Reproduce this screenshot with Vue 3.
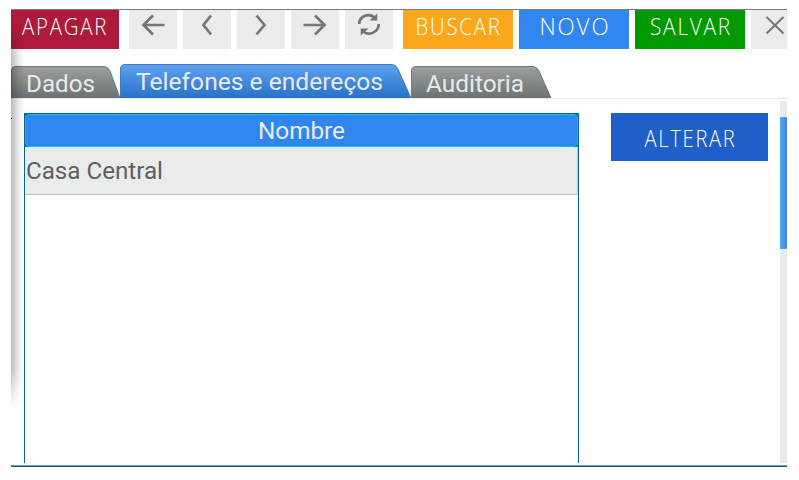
<script setup>
const actions = [
  { kind: 'text', label: 'APAGAR', color: '#ad1a3c', width: 108, gap: 10, x: 11, length: 86 },
  { kind: 'icon', icon: 'back', width: 48, gap: 6 },
  { kind: 'icon', icon: 'prev', width: 48, gap: 6 },
  { kind: 'icon', icon: 'next', width: 48, gap: 6 },
  { kind: 'icon', icon: 'forward', width: 48, gap: 6 },
  { kind: 'icon', icon: 'refresh', width: 48, gap: 10 },
  { kind: 'text', label: 'BUSCAR', color: '#fba71b', width: 110, gap: 6, x: 12.5, length: 86 },
  { kind: 'text', label: 'NOVO', color: '#2f86ef', width: 110, gap: 6, x: 20.5, length: 71 },
  { kind: 'text', label: 'SALVAR', color: '#009900', width: 110, gap: 6, x: 15, length: 82 },
  { kind: 'icon', icon: 'close', width: 36, gap: 0 },
]

const icons = {
  back: 'M35.5 15H14.5M24 5.5L14.5 15L24 24.5',
  prev: 'M28 5.5L20.5 15L28 24.5',
  next: 'M19.5 5.5L27.5 15L19.5 24.5',
  forward: 'M12.5 15H33.5M24 5.5L33.5 15L24 24.5',
  close: 'M15.5 7L32.5 23.5M32.5 7L15.5 23.5',
}

const tabs = [
  { label: 'Dados', width: 109, height: 32, slope: 10, x: 15, y: 26, length: 69, active: false },
  { label: 'Telefones e endereços', width: 291, height: 34, slope: 13, x: 16, y: 26, length: 247, active: true },
  { label: 'Auditoria', width: 140, height: 32, slope: 12, x: 15, y: 26, length: 98, active: false },
]

function tabPath(t) {
  const s = t.width - t.slope
  return `M.5 ${t.height}V5Q.5 .5 5 .5H${s - 6}Q${s - 2} .5 ${s} 5L${t.width} ${t.height}`
}
</script>

<template>
  <main class="window">
    <div class="toolbar">
      <button
        v-for="(a, i) in actions"
        :key="i"
        class="action"
        :style="{ width: a.width + 'px', marginRight: a.gap + 'px', background: a.color }"
      >
        <svg v-if="a.kind === 'text'" class="art" :width="a.width" height="39">
          <text class="light" :x="a.x" y="25" :textLength="a.length" lengthAdjust="spacingAndGlyphs">{{ a.label }}</text>
        </svg>
        <svg v-else-if="a.icon === 'refresh'" class="art" width="48" height="39">
          <g fill="none" stroke="#757575" stroke-width="2.7">
            <path d="M14.3 14C14.3 5.5 25 2 30.5 8.5" />
            <path d="M33.7 14C33.7 22.5 23 27 17.5 20.5" />
          </g>
          <path d="M32.3 3.5V10.5H24.5ZM15.7 25.5V18.5H23.5Z" fill="#757575" />
        </svg>
        <svg v-else class="art" width="48" height="39">
          <path class="stroke" :class="{ thin: a.icon === 'close' }" :d="icons[a.icon]" />
        </svg>
      </button>
    </div>

    <nav class="tabs">
      <svg v-for="t in tabs" :key="t.label" class="tab" :width="t.width" :height="t.height">
        <defs>
          <linearGradient :id="'fill-' + t.width" x1="0" y1="0" x2="0" y2="1">
            <stop offset="0" :stop-color="t.active ? '#5ea2ef' : '#9b9fa0'" />
            <stop offset="1" :stop-color="t.active ? '#2872c9' : '#6c7273'" />
          </linearGradient>
        </defs>
        <path :d="tabPath(t)" :fill="`url(#fill-${t.width})`" :stroke="t.active ? '#3d7cc4' : '#72797a'" />
        <text class="tab-label" :x="t.x" :y="t.y" :textLength="t.length" lengthAdjust="spacingAndGlyphs">{{ t.label }}</text>
      </svg>
    </nav>

    <section class="content">
      <div class="grid">
        <div class="head"><div class="head-cell">
          <svg class="art" width="551" height="31"><text class="tab-label" x="232" y="24" textLength="87" lengthAdjust="spacingAndGlyphs">Nombre</text></svg>
        </div></div>
        <div class="row">
          <svg class="art" width="552" height="47"><text class="cell" x="1" y="32" textLength="137" lengthAdjust="spacingAndGlyphs">Casa Central</text></svg>
        </div>
      </div>
      <button class="alter">
        <svg class="art" width="157" height="48"><text class="light" x="33.5" y="34" textLength="92" lengthAdjust="spacingAndGlyphs">ALTERAR</text></svg>
      </button>
      <div class="scroll"><div class="thumb"></div></div>
    </section>
    <div class="shade"></div>
    <div class="tick"></div>
  </main>
</template>

<style>
body { background: #fff; }
</style>

<style scoped>
* { box-sizing: border-box; }
.window {
  position: relative;
  width: 776px;
  height: 458px;
  margin: 9px 0 0 11px;
  border-top: 1px solid #7c7c7c;
  border-bottom: 1px solid #00659b;
  box-shadow: inset 0 -1px #839196;
  display: flex;
  flex-direction: column;
}
.toolbar { display: flex; height: 39px; }
.action, .alter { border: 0; padding: 0; border-radius: 0; flex: none; overflow: hidden; }
.action { height: 39px; background: #eaecec; }
.art { display: block; }
.light { font: 300 23.5px "Open Sans", sans-serif; letter-spacing: 2px; fill: #fff; }
.stroke { fill: none; stroke: #757575; stroke-width: 2.7; }
.thin { stroke-width: 2; }
.tabs { display: flex; align-items: flex-end; height: 50px; border-bottom: 1px solid #e7e9e9; }
.tab { display: block; flex: none; }
.tab-label { font: 24px Roboto, sans-serif; fill: #e9ebeb; }
.content { display: flex; align-items: flex-start; height: 366px; }
.grid {
  width: 555px;
  height: 350px;
  margin: 14px 32px 0 13px;
  border: 1px solid #00659b;
  border-bottom: 0;
}
.head { height: 33px; background: #2077a5; }
.head-cell {
  height: 33px;
  border: 1px solid #00c3f7;
  border-radius: 5px;
  background: #2f86ef;
}
.row { height: 48px; background: #eaecec; border-right: 1px solid #bfc1c1; border-bottom: 1px solid #bfc1c1; }
.cell { font: 24px Roboto, sans-serif; fill: #5d5f5f; }
.alter { width: 157px; height: 48px; margin: 14px 12px 0 0; background: #1f60c8; }
.scroll { width: 7px; height: 362px; margin-top: 2px; padding-top: 16px; background: #e9ebeb; }
.thumb { height: 132px; border: solid #37b3ee; border-width: 1px 0 1px 1px; background: linear-gradient(90deg, #5b9eea, #3f82dc); }
.shade {
  position: absolute;
  left: 0;
  top: 12px;
  width: 13px;
  height: 386px;
  background: linear-gradient(90deg, rgba(0, 0, 0, .27), rgba(0, 0, 0, .1) 50%, transparent);
  mask-image: linear-gradient(transparent, #000 35px, #000 345px, transparent);
}
.tick { position: absolute; left: 0; top: 108px; width: 1px; height: 1px; background: #00b; }
</style>
